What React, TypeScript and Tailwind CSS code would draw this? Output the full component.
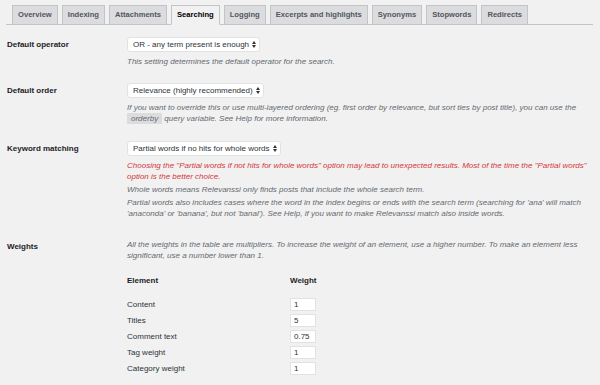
import React from 'react';

const tabs = [
  'Overview',
  'Indexing',
  'Attachments',
  'Searching',
  'Logging',
  'Excerpts and highlights',
  'Synonyms',
  'Stopwords',
  'Redirects',
];

const weights: [string, string][] = [
  ['Content', '1'],
  ['Titles', '5'],
  ['Comment text', '0.75'],
  ['Tag weight', '1'],
  ['Category weight', '1'],
];

function Select({ value }: { value: string }) {
  return (
    <div className="flex h-[15px] w-fit items-center whitespace-nowrap rounded-[3px] border border-[#e2e2e2] bg-white pl-[5px] pr-[3px] text-[8px] text-[#2c3338]">
      <span>{value}</span>
      <svg width="4" height="7" viewBox="0 0 4 7" className="ml-[3px]">
        <path d="M0 3L2 0L4 3Z" fill="#333" />
        <path d="M0 4L2 7L4 4Z" fill="#333" />
      </svg>
    </div>
  );
}

function Row({ label, children, className }: { label: string; children: React.ReactNode; className?: string }) {
  return (
    <div className={`flex ${className ?? ''}`}>
      <div className="w-[120px] shrink-0 pt-[4px] text-[8px] font-semibold leading-[8px] text-[#1d2327]">{label}</div>
      <div className="flex-1">{children}</div>
    </div>
  );
}

export default function App() {
  return (
    <div className="h-[385px] w-[600px] overflow-hidden bg-[#f1f1f1] pl-[6px] pr-[7px] pt-[5px] font-['Liberation_Sans',Arial,sans-serif]">
      <div className="flex gap-[4px] border-b border-[#c3c4c7] pl-[6px]">
        {tabs.map((t) => (
          <div
            key={t}
            className={`-mb-px flex h-[20px] items-center border border-[#c3c4c7] px-[5px] text-[7.6px] font-semibold ${
              t === 'Searching' ? 'border-b-[#f1f1f1] bg-[#f1f1f1] text-black' : 'bg-[#dcdcde] text-[#50575e]'
            }`}
          >
            {t}
          </div>
        ))}
      </div>

      <div className="pl-[1px] text-[8px]">
        <Row label="Default operator" className="mt-[12px]">
          <Select value="OR - any term present is enough" />
          <p className="mt-[4px] text-[8px] italic leading-[11px] text-[#646970]">
            This setting determines the default operator for the search.
          </p>
        </Row>

        <Row label="Default order" className="mt-[16px]">
          <Select value="Relevance (highly recommended)" />
          <p className="mt-[4px] text-[8px] italic leading-[11px] text-[#646970]">
            If you want to override this or use multi-layered ordering (eg. first order by relevance, but sort ties by
            post title), you can use the{' '}
            <code className="bg-[#dcdcde] px-[4px] py-[1px] font-['Liberation_Sans',Arial,sans-serif] italic">orderby</code>{' '}
            query variable. See Help for more information.
          </p>
        </Row>

        <Row label="Keyword matching" className="mt-[17px]">
          <Select value="Partial words if no hits for whole words" />
          <p className="mt-[4px] text-[8px] italic leading-[11px] text-[#d63638]">
            Choosing the "Partial words if not hits for whole words" option may lead to unexpected results. Most of the
            time the "Partial words" option is the better choice.
          </p>
          <p className="mt-[2px] text-[8px] italic leading-[11px] text-[#646970]">
            Whole words means Relevanssi only finds posts that include the whole search term.
          </p>
          <p className="mt-[2px] text-[8px] italic leading-[11px] text-[#646970]">
            Partial words also includes cases where the word in the index begins or ends with the search term (searching
            for 'ana' will match 'anaconda' or 'banana', but not 'banal'). See Help, if you want to make Relevanssi match
            also inside words.
          </p>
        </Row>

        <Row label="Weights" className="mt-[20px]">
          <p className="text-[8px] italic leading-[11px] text-[#646970]">
            All the weights in the table are multipliers. To increase the weight of an element, use a higher number. To
            make an element less significant, use a number lower than 1.
          </p>
          <div className="mt-[15px] flex text-[8px] font-semibold leading-[10px] text-[#1d2327]">
            <div className="w-[163px]">Element</div>
            <div>Weight</div>
          </div>
          <div className="mt-[12px] flex flex-col gap-[3px]">
            {weights.map(([name, v]) => (
              <div key={name} className="flex h-[13px] items-center text-[8px] text-[#2c3338]">
                <div className="w-[163px]">{name}</div>
                <div className="flex h-[13px] w-[26px] items-center border border-[#e2e2e2] bg-white pl-[3px]">{v}</div>
              </div>
            ))}
          </div>
        </Row>
      </div>
    </div>
  );
}
